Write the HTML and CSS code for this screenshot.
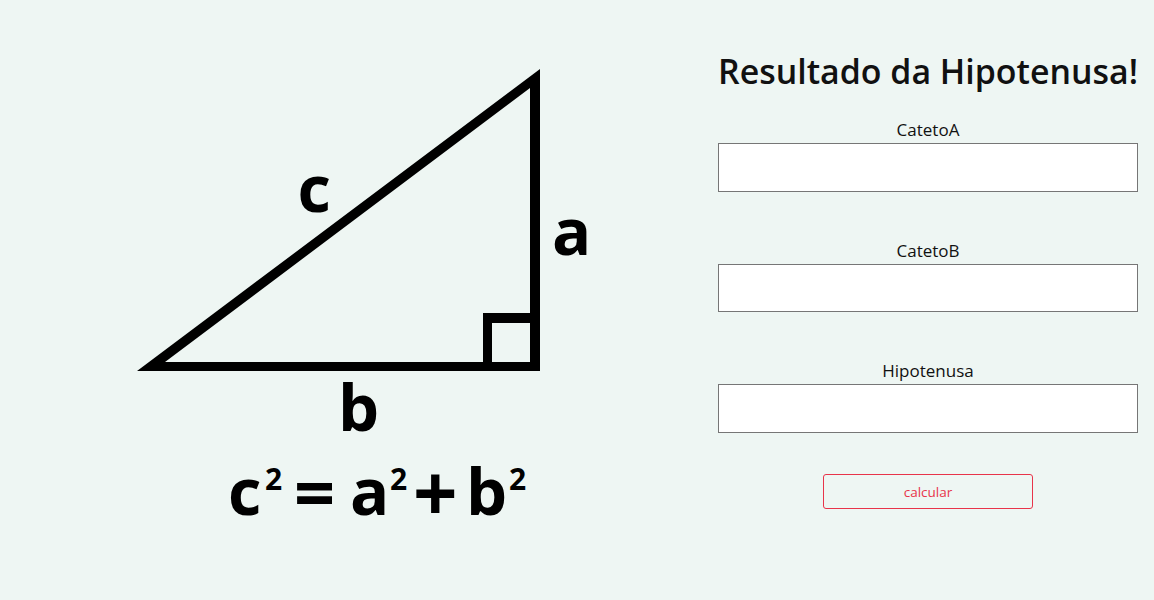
FILE: index.html
```html
<!DOCTYPE html>
<html lang="en">
<head>
    <meta charset="UTF-8">
    <meta name="viewport" content="width=device-width, initial-scale=1.0">
    <title>Hipotenusa</title>
    <link rel="stylesheet" href="styles.css">
</head>
<body>
    <main class="container">
        <svg class="figure" viewBox="0 0 718 600" width="718" height="600" role="img" aria-label="Triângulo retângulo">
            <path fill-rule="evenodd" d="M137 371 L540 69 L540 371 Z M165 362 L483 362 L483 313 L530 313 L530 88 Z M492 323 L492 362 L530 362 L530 323 Z"/>
            <text class="letter" x="297.5" y="212">c</text>
            <text class="letter" x="552" y="255">a</text>
            <text class="letter" x="338" y="431">b</text>
            <text class="letter" x="228" y="515">c</text>
            <text class="power" x="265" y="490">2</text>
            <text class="sign-eq" x="294" y="519">=</text>
            <text class="letter" x="350" y="515">a</text>
            <text class="power" x="390" y="490">2</text>
            <text class="sign-plus" x="413" y="522">+</text>
            <text class="letter" x="466" y="515">b</text>
            <text class="power" x="509" y="490">2</text>
        </svg>

        <form class="calc">
            <h1>Resultado da Hipotenusa!</h1>
            <div class="field">
                <label for="catetoA">CatetoA</label>
                <input type="text" id="catetoA">
            </div>
            <div class="field">
                <label for="catetoB">CatetoB</label>
                <input type="text" id="catetoB">
            </div>
            <div class="field">
                <label for="hipotenusa">Hipotenusa</label>
                <input type="text" id="hipotenusa">
            </div>
            <button type="button" class="btn-calc">calcular</button>
        </form>
    </main>
</body>
</html>
```

FILE: styles.css
```css
* {
    margin: 0;
    padding: 0;
    box-sizing: border-box;
}

body {
    background-color: #eef6f3;
    font-family: "Open Sans", "Noto Sans", sans-serif;
    color: #111;
    overflow: hidden;
}

.container {
    display: flex;
    height: 600px;
}

.figure {
    flex: 0 0 718px;
    display: block;
}

.letter,
.power,
.sign-eq,
.sign-plus {
    font-family: "Open Sans", sans-serif;
    font-weight: 700;
    fill: #000;
}

.letter {
    font-size: 65px;
}

.power {
    font-size: 30px;
}

.sign-eq {
    font-size: 72px;
}

.sign-plus {
    font-size: 78px;
}

.calc {
    width: 420px;
    display: flex;
    flex-direction: column;
    align-items: center;
    padding-top: 47px;
}

.calc h1 {
    font-size: 33.9px;
    font-weight: 600;
    line-height: 48px;
    white-space: nowrap;
    margin-bottom: 24px;
}

.field {
    width: 100%;
    display: flex;
    flex-direction: column;
    align-items: center;
    margin-bottom: 48px;
}

.field label {
    font-size: 17px;
    line-height: 22px;
    margin-bottom: 2px;
}

.field input {
    width: 100%;
    height: 48.5px;
    background: #fff;
    border: 1px solid #767676;
}

.btn-calc {
    width: 210px;
    height: 35px;
    margin-top: -6.5px;
    background: transparent;
    border: 1px solid #e8344a;
    border-radius: 3px;
    color: #e8344a;
    font-family: inherit;
    font-size: 13.5px;
    padding-top: 1px;
}
```
